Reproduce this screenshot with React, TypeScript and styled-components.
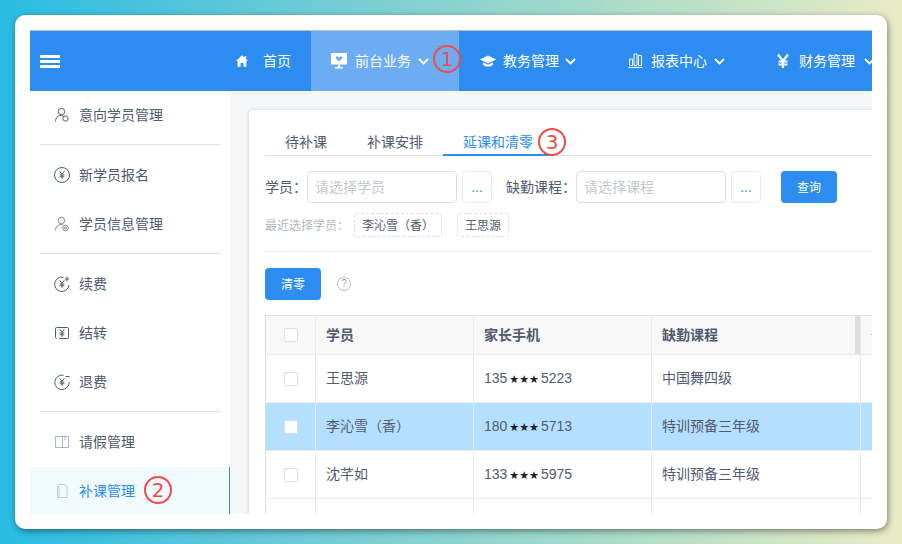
import React, { FunctionComponent, ReactNode } from 'react'
import styled, { createGlobalStyle } from 'styled-components'

const FONT = `"Liberation Sans", "Noto Sans CJK SC", sans-serif`
const BLUE = '#2d8cf0'
const TEXT = '#515a6e'
const LINE = '#e8eaec'

const GlobalStyle = createGlobalStyle`
  html, body {
    margin: 0;
    padding: 0;
    font-family: ${FONT};
  }
  * {
    box-sizing: border-box;
  }
`

const Icon = styled.svg<{ $w?: number; $h?: number }>`
  display: block;
  flex: none;
  width: ${(p): number => p.$w ?? 16}px;
  height: ${(p): number => p.$h ?? 16}px;
`

const SideIcon: FunctionComponent<{ children: ReactNode; color?: string }> = ({ children, color = TEXT }) => (
  <Icon viewBox="0 0 16 16" fill="none" stroke={color} strokeWidth="1">
    {children}
  </Icon>
)

const YEN = 'M5.6 4.2 8 7.4l2.4-3.2M8 7.4v4.4M5.6 8h4.8M5.6 9.8h4.8'

const NAV = [
  {
    label: '教务管理',
    icon: (
      <Icon viewBox="0 0 16 16" fill="#fff">
        <path d="M8 2.5 16 6.5 8 10.5 0 6.5z" />
        <path d="M3 9.2v2.6c1.4 1.3 3 1.8 5 1.8s3.6-.5 5-1.8V9.2l-5 2.6z" />
      </Icon>
    ),
    gap: 7,
    left: 21
  },
  {
    label: '报表中心',
    icon: (
      <Icon viewBox="0 0 15 16" $w={15} fill="none" stroke="#fff" strokeWidth="1">
        <path d="M.5 14.5h14M1.5 12.5V6h3v6.5zM6 12.5V1h3v11.5zM10.5 12.5V2.5h3v10z" />
      </Icon>
    ),
    gap: 8,
    left: 20
  },
  {
    label: '财务管理',
    icon: (
      <Icon viewBox="0 0 12 16" $w={12} fill="none" stroke="#fff" strokeWidth="2.2">
        <path d="M1 1.5 6 8l5-6.5M6 8v7M1.5 8.5h9M1.5 11.5h9" />
      </Icon>
    ),
    gap: 10,
    left: 20
  }
]

const ChevronIcon = styled(Icon)`
  margin-left: -1px;
`

const Chevron: FunctionComponent = () => (
  <ChevronIcon viewBox="0 0 11 7" $w={11} $h={7} fill="none" stroke="#fff" strokeWidth="1.8">
    <path d="M1 1l4.5 4.5L10 1" />
  </ChevronIcon>
)

const STUDENTS = [
  { name: '王思源', head: '135', tail: '5223', course: '中国舞四级', selected: false },
  { name: '李沁雪（香）', head: '180', tail: '5713', course: '特训预备三年级', selected: true },
  { name: '沈芊如', head: '133', tail: '5975', course: '特训预备三年级', selected: false }
]

export default function App(): React.ReactElement {
  return (
    <Page>
      <GlobalStyle />
      <Card>
        <Shell>
          <Header>
            <Burger>
              <span />
              <span />
              <span />
            </Burger>
            <NavItem $left={20} $gap={15} $width={95}>
              <Icon viewBox="0 0 12 12" $w={12} $h={12} fill="#fff">
                <path d="M6 .3 8.6 2.7V1.2h1.6V4.2L12 6h-1.6v5.7H7.4V8H4.6v3.7H1.6V6H0z" />
              </Icon>
              <NavLabel>首页</NavLabel>
            </NavItem>
            <NavItem $left={20} $gap={8} $width={148} $active>
              <Icon viewBox="0 0 16 16" fill="#fff">
                <path fillRule="evenodd" d="M0 0h16v11.5H0zM8 8.6 4.8 5.6c-1-1.4.9-3 2.2-1.9l1 .8 1-.8c1.3-1.1 3.2.5 2.2 1.9z" />
                <path d="M7 11.5h2v2.5h3v1.5H4V14h3z" />
              </Icon>
              <NavLabel>前台业务</NavLabel>
              <Chevron />
              <Mark $x={122} $y={14}>1</Mark>
            </NavItem>
            {NAV.map((item) => (
              <NavItem key={item.label} $left={item.left} $gap={item.gap} $width={149}>
                {item.icon}
                <NavLabel>{item.label}</NavLabel>
                <Chevron />
              </NavItem>
            ))}
          </Header>
          <Body>
            <Sidebar>
              <MenuItem>
                <SideIcon>
                  <circle cx="7.5" cy="4.5" r="3.2" />
                  <path d="M1.5 14.5c0-3.5 2.2-6 5.5-6 1.2 0 2.2.4 3 1" />
                  <circle cx="11.5" cy="11.5" r="2.6" />
                </SideIcon>
                <MenuLabel>意向学员管理</MenuLabel>
              </MenuItem>
              <MenuDivider />
              <MenuItem>
                <SideIcon>
                  <circle cx="8" cy="8" r="7.5" />
                  <path d={YEN} />
                </SideIcon>
                <MenuLabel>新学员报名</MenuLabel>
              </MenuItem>
              <MenuItem>
                <SideIcon color="#7d8699">
                  <circle cx="7.5" cy="4.5" r="3.2" />
                  <path d="M1.5 14.5c0-3.5 2.2-6 5.5-6 .8 0 1.5.1 2 .4" />
                  <circle cx="11.5" cy="12" r="2.8" />
                  <circle cx="11.5" cy="12" r="1" />
                </SideIcon>
                <MenuLabel>学员信息管理</MenuLabel>
              </MenuItem>
              <MenuDivider />
              <MenuItem>
                <SideIcon>
                  <path d="M9.5 1.3A7.2 7.2 0 1 0 15 9" />
                  <path d={YEN} />
                  <path d="M13 .5v5M10.8 3h4.4" />
                </SideIcon>
                <MenuLabel>续费</MenuLabel>
              </MenuItem>
              <MenuItem>
                <SideIcon>
                  <path d="M3 2.5h10.5a1 1 0 0 1 1 1v9a1 1 0 0 1-1 1H5M3 13.5h-.5a1 1 0 0 1-1-1v-9a1 1 0 0 1 1-1" />
                  <path d={YEN} />
                </SideIcon>
                <MenuLabel>结转</MenuLabel>
              </MenuItem>
              <MenuItem>
                <SideIcon>
                  <path d="M9.5 1.3A7.2 7.2 0 1 0 15.2 8" />
                  <path d={YEN} />
                  <path d="M11.5 2.5h4" />
                </SideIcon>
                <MenuLabel>退费</MenuLabel>
              </MenuItem>
              <MenuDivider />
              <MenuItem>
                <SideIcon color="#a9b3d0">
                  <path d="M1.5 2.5h13v11h-13zM8.5 2.5v11M11 2.5v3.5" />
                </SideIcon>
                <MenuLabel>请假管理</MenuLabel>
              </MenuItem>
              <MenuItem $active>
                <SideIcon color="#b9c8f2">
                  <path d="M5 1.5h6l2 2v11H5zM5 3.5H3.5v11H5" />
                </SideIcon>
                <MenuLabel>补课管理</MenuLabel>
                <Mark $x={114} $y={9}>2</Mark>
              </MenuItem>
            </Sidebar>
            <Main>
              <Panel>
                <Tabs>
                  <Tab>待补课</Tab>
                  <Tab>补课安排</Tab>
                  <Tab $active>
                    延课和清零
                    <Mark $x={95} $y={6}>3</Mark>
                  </Tab>
                </Tabs>
                <FilterRow>
                  <FieldLabel>学员：</FieldLabel>
                  <Field placeholder="请选择学员" readOnly />
                  <MoreButton>...</MoreButton>
                  <FieldLabel $left={14}>缺勤课程：</FieldLabel>
                  <Field placeholder="请选择课程" readOnly />
                  <MoreButton>...</MoreButton>
                  <PrimaryButton $left={20}>查询</PrimaryButton>
                </FilterRow>
                <RecentRow>
                  <RecentLabel>最近选择学员：</RecentLabel>
                  <RecentTag>李沁雪（香）</RecentTag>
                  <RecentTag>王思源</RecentTag>
                </RecentRow>
                <PanelDivider />
                <ActionRow>
                  <PrimaryButton>清零</PrimaryButton>
                  <HelpIcon>?</HelpIcon>
                </ActionRow>
                <Table>
                  <colgroup>
                    <col width={50} />
                    <col width={158} />
                    <col width={178} />
                    <col width={209} />
                    <col width={120} />
                  </colgroup>
                  <thead>
                    <tr>
                      <HeadCell $flush>
                        <Check />
                      </HeadCell>
                      <HeadCell>学员</HeadCell>
                      <HeadCell>家长手机</HeadCell>
                      <HeadCell>
                        缺勤课程
                        <ResizeHandle />
                      </HeadCell>
                      <HeadCell>
                        <SortTick />
                      </HeadCell>
                    </tr>
                  </thead>
                  <tbody>
                    {STUDENTS.map((s) => (
                      <Row key={s.name} $selected={s.selected}>
                        <Cell $bottom={0}>
                          <Check />
                        </Cell>
                        <Cell>{s.name}</Cell>
                        <Cell $bottom={1}>
                          {s.head}
                          <Stars>★★★</Stars>
                          {s.tail}
                        </Cell>
                        <Cell>{s.course}</Cell>
                        <Cell />
                      </Row>
                    ))}
                    <Row>
                      <Cell />
                      <Cell />
                      <Cell />
                      <Cell />
                      <Cell />
                    </Row>
                  </tbody>
                </Table>
              </Panel>
            </Main>
          </Body>
        </Shell>
      </Card>
    </Page>
  )
}

const Page = styled.div`
  width: 902px;
  height: 544px;
  padding: 15px;
  overflow: hidden;
  background: linear-gradient(90deg, #28bce4 0%, #6ccad6 33%, #a6dbc9 66%, #e9ebc4 100%);
`

const Card = styled.div`
  height: 514px;
  padding: 15px;
  border-radius: 10px;
  background: #fff;
  box-shadow: 1px 2px 6px rgba(0, 0, 0, 0.45);
`

const Shell = styled.div`
  display: flex;
  flex-direction: column;
  height: 484px;
  overflow: hidden;
  border-top: 1px solid #b9bcc0;
`

const Header = styled.header`
  display: flex;
  flex: none;
  align-items: stretch;
  height: 60px;
  background: ${BLUE};
`

const Burger = styled.div`
  display: flex;
  flex: none;
  flex-direction: column;
  justify-content: center;
  gap: 2px;
  width: 186px;
  padding: 1px 0 0 10px;

  span {
    display: block;
    width: 20px;
    height: 3px;
    background: #fff;
  }
`

const NavItem = styled.div<{ $left: number; $gap: number; $width: number; $active?: boolean }>`
  position: relative;
  display: flex;
  flex: none;
  align-items: center;
  gap: ${(p): number => p.$gap}px;
  width: ${(p): number => p.$width}px;
  padding-left: ${(p): number => p.$left}px;
  font-size: 14px;
  color: #fff;
  background: ${(p): string => (p.$active ? '#6cacf3' : 'transparent')};
`

const NavLabel = styled.span`
  margin-bottom: 2px;
`

const Mark = styled.span<{ $x: number; $y: number }>`
  position: absolute;
  left: ${(p): number => p.$x}px;
  top: ${(p): number => p.$y}px;
  display: flex;
  align-items: center;
  justify-content: center;
  width: 28px;
  height: 28px;
  border: 2px solid #ee4b4b;
  border-radius: 50%;
  font-family: "DejaVu Sans", sans-serif;
  font-size: 20px;
  line-height: 1;
  color: #ee4b4b;
`

const Body = styled.div`
  display: flex;
  flex: 1;
  min-height: 0;
`

const Sidebar = styled.nav`
  flex: none;
  width: 200px;
  background: #fff;
`

const MenuItem = styled.div<{ $active?: boolean }>`
  position: relative;
  display: flex;
  align-items: center;
  gap: 9px;
  height: 48px;
  margin-bottom: 1px;
  padding-left: 24px;
  font-size: 14px;
  color: ${(p): string => (p.$active ? BLUE : TEXT)};
  background: ${(p): string => (p.$active ? '#f0faff' : 'transparent')};
  border-right: 1px solid ${(p): string => (p.$active ? BLUE : 'transparent')};
`

const MenuLabel = styled.span`
  margin-bottom: 2px;
`

const MenuDivider = styled.div`
  height: 1px;
  margin: 5px 9px 6px 10px;
  background: #e0e0e0;
`

const Main = styled.main`
  flex: 1;
  min-width: 0;
  padding: 19px 0 0 19px;
  background: #f5f7f9;
`

const Panel = styled.section`
  width: 720px;
  height: 500px;
  padding: 12px 16px 0;
  border-radius: 4px 0 0 0;
  background: #fff;
  box-shadow: 0 0 4px rgba(0, 0, 0, 0.18);
`

const Tabs = styled.div`
  display: flex;
  height: 34px;
  border-bottom: 1px solid #dcdee2;
`

const Tab = styled.div<{ $active?: boolean }>`
  position: relative;
  height: 34px;
  padding: 10px 20px 0;
  font-size: 14px;
  line-height: 20px;
  color: ${(p): string => (p.$active ? BLUE : TEXT)};
  border-bottom: 2px solid ${(p): string => (p.$active ? BLUE : 'transparent')};
`

const FilterRow = styled.div`
  display: flex;
  align-items: center;
  height: 32px;
  margin-top: 15px;
`

const FieldLabel = styled.label<{ $left?: number }>`
  flex: none;
  width: ${(p): number => (p.$left ? 70 : 42)}px;
  margin-left: ${(p): number => p.$left ?? 0}px;
  margin-bottom: 2px;
  font-size: 14px;
  color: ${TEXT};
`

const Field = styled.input`
  flex: none;
  width: 150px;
  height: 32px;
  padding: 0 7px;
  border: 1px solid #dcdee2;
  border-radius: 4px;
  outline: none;
  font-family: ${FONT};
  font-size: 14px;
  color: ${TEXT};

  &::placeholder {
    color: #c5c8ce;
  }
`

const MoreButton = styled.button`
  flex: none;
  width: 30px;
  height: 32px;
  margin-left: 5px;
  padding: 0;
  border: 1px solid #e8eaec;
  border-radius: 4px;
  background: #fff;
  font-family: ${FONT};
  font-size: 14px;
  color: ${BLUE};
`

const PrimaryButton = styled.button<{ $left?: number }>`
  flex: none;
  width: 56px;
  height: 32px;
  margin-left: ${(p): number => p.$left ?? 0}px;
  padding: 0 0 2px;
  border: 0;
  border-radius: 4px;
  background: ${BLUE};
  font-family: ${FONT};
  font-size: 12px;
  color: #fff;
`

const RecentRow = styled.div`
  display: flex;
  align-items: center;
  height: 24px;
  margin-top: 10px;
`

const RecentLabel = styled.span`
  flex: none;
  width: 89px;
  margin-bottom: 1px;
  font-size: 12px;
  color: #b4b7bd;
`

const RecentTag = styled.span`
  display: flex;
  flex: none;
  align-items: center;
  height: 24px;
  margin-right: 15px;
  padding: 0 7px 2px;
  border: 1px dashed #dcdee2;
  border-radius: 2px;
  font-size: 12px;
  color: ${TEXT};
`

const PanelDivider = styled.div`
  height: 1px;
  margin-top: 14px;
  background: #ececec;
`

const ActionRow = styled.div`
  display: flex;
  align-items: center;
  gap: 16px;
  margin-top: 16px;
`

const HelpIcon = styled.span`
  display: flex;
  align-items: center;
  justify-content: center;
  width: 14px;
  height: 14px;
  margin-bottom: 1px;
  border: 1px solid #b9bcc0;
  border-radius: 50%;
  font-size: 10px;
  color: #9ea3ad;
`

const Table = styled.table`
  width: 715px;
  margin-top: 15px;
  table-layout: fixed;
  border-collapse: separate;
  border-spacing: 0;
  border-top: 1px solid #dcdee2;
  border-left: 1px solid #dcdee2;
  font-size: 14px;
  color: ${TEXT};
`

const HeadCell = styled.th<{ $flush?: boolean }>`
  position: relative;
  height: 39px;
  padding: 0 10px ${(p): number => (p.$flush ? 0 : 2)}px;
  border-right: 1px solid ${LINE};
  border-bottom: 1px solid ${LINE};
  background: #f8f8f9;
  font-weight: 700;
  text-align: left;
`

const Row = styled.tr<{ $selected?: boolean }>`
  background: ${(p): string => (p.$selected ? '#b5dfff' : '#fff')};
`

const Cell = styled.td<{ $bottom?: number }>`
  height: 48px;
  padding: 0 10px ${(p): number => p.$bottom ?? 3}px;
  border-right: 1px solid ${LINE};
  border-bottom: 1px solid ${LINE};
`

const Check = styled.span`
  display: block;
  width: 14px;
  height: 14px;
  margin-left: 8px;
  border: 1px solid #dcdee2;
  border-radius: 2px;
  background: #fff;
`

const Stars = styled.span`
  margin: 0 2px;
  font-family: "DejaVu Sans", sans-serif;
  font-size: 11px;
  color: #222;
`

const ResizeHandle = styled.span`
  position: absolute;
  top: 0;
  right: 0;
  bottom: 0;
  width: 5px;
  background: #dedede;
`

const SortTick = styled.span`
  display: block;
  width: 3px;
  height: 1px;
  background: #e8b765;
`
